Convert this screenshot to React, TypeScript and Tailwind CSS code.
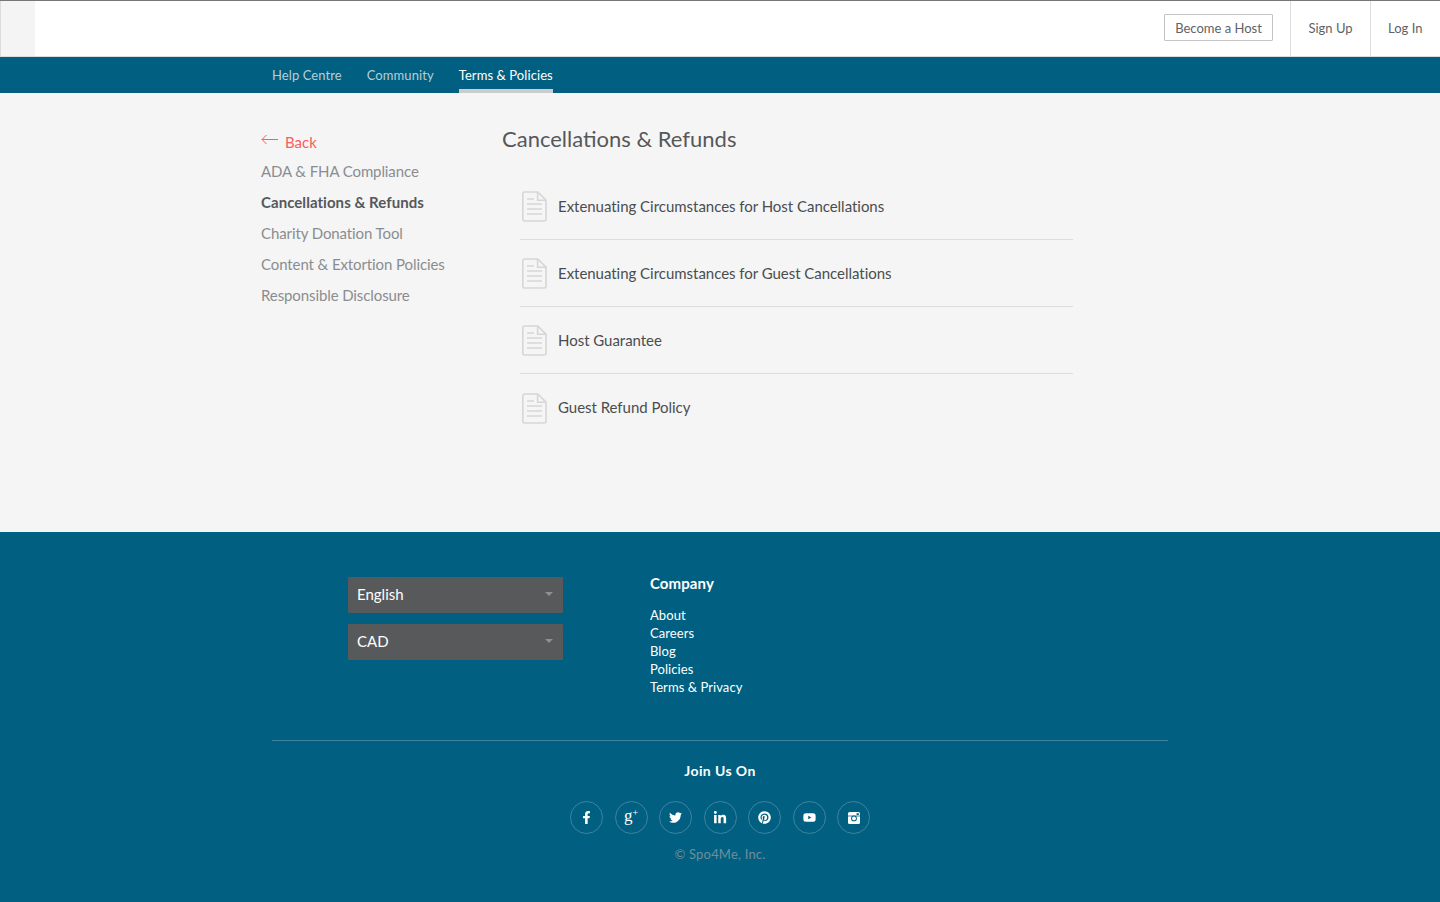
import React from "react";
import { FaFacebookF, FaTwitter, FaLinkedinIn, FaPinterest, FaYoutube } from "react-icons/fa";

function DocIcon() {
  return (
    <svg width="25" height="31" viewBox="0 0 25 31" fill="none" stroke="#d6d6d6" strokeWidth="1.6" className="shrink-0 mt-[1px] mr-[1px]">
      <path d="M2.4 1H15.8L24 9.2V28.4a1.6 1.6 0 0 1-1.6 1.6H2.4a1.6 1.6 0 0 1-1.6-1.6V2.6a1.6 1.6 0 0 1 1.6-1.6Z" />
      <path d="M15.6 1.4V9.3H23.8" />
      <path d="M5 8h7M5 13h15M5 18h15M5 23h15" />
    </svg>
  );
}

function InstagramIcon() {
  return (
    <svg width="12" height="12" viewBox="0 0 12 12">
      <rect x="0" y="0" width="12" height="12" rx="1.5" fill="#ffffff" />
      <rect x="0" y="3.6" width="12" height="0.8" fill="#016081" />
      <circle cx="6" cy="6.4" r="2.9" fill="#016081" />
      <circle cx="6" cy="6.4" r="1.9" fill="#ffffff" />
      <rect x="8.6" y="1.2" width="2.2" height="1.8" fill="#016081" />
    </svg>
  );
}

const docs = [
  "Extenuating Circumstances for Host Cancellations",
  "Extenuating Circumstances for Guest Cancellations",
  "Host Guarantee",
  "Guest Refund Policy",
];

const side = [
  ["ADA & FHA Compliance", false],
  ["Cancellations & Refunds", true],
  ["Charity Donation Tool", false],
  ["Content & Extortion Policies", false],
  ["Responsible Disclosure", false],
] as const;

function Social({ children }: { children: React.ReactNode }) {
  return (
    <div className="w-[33px] h-[33px] rounded-full border border-[#3f83a0] flex items-center justify-center text-white">
      {children}
    </div>
  );
}

function Select({ label }: { label: string }) {
  return (
    <div className="relative h-9 w-[215px] bg-[#58595b] flex items-center pl-[9px] pb-[1px] text-[15px] text-white rounded-[1px]">
      {label}
      <span className="absolute right-[10px] top-[15px] w-0 h-0 border-l-[4px] border-r-[4px] border-t-[4px] border-l-transparent border-r-transparent border-t-[#8f9091]" />
    </div>
  );
}

export default function App() {
  return (
    <div className="min-h-[902px] flex flex-col font-['Lato','Liberation_Sans',sans-serif] bg-[#f5f5f5]">
      <header className="h-[57px] bg-white border-t border-t-[#777777] border-b border-b-[#dcdcdc] flex items-stretch">
        <div className="w-[35px] bg-[#f4f4f4] border-l border-l-[#dcdcdc]" />
        <div className="flex-1" />
        <div className="flex items-center pr-[17px] pb-[2px]">
          <div className="h-[27px] w-[109px] border border-[#c4c4c4] rounded-[1px] pt-[2px] flex items-center justify-center text-[13px] text-[#5f6265]">
            Become a Host
          </div>
        </div>
        <div className="w-[80px] border-l border-l-[#dcdcdc] flex items-center justify-center text-[13px] text-[#5f6265]">
          Sign Up
        </div>
        <div className="w-[70px] border-l border-l-[#dcdcdc] flex items-center pl-[17px] text-[13px] text-[#5f6265]">
          Log In
        </div>
      </header>

      <nav className="h-9 bg-[#016081] flex items-stretch pl-[272px] gap-[25px] text-[13px] tracking-[0.08px]">
        <div className="flex items-center text-[#b9cdd6] pt-[2px]">Help Centre</div>
        <div className="flex items-center text-[#b9cdd6] pt-[2px]">Community</div>
        <div className="flex items-center text-white border-b-4 border-b-[#cccccc] pt-[5px]">Terms &amp; Policies</div>
      </nav>

      <main className="h-[439px] flex bg-[#f5f5f5] pl-[261px]">
        <aside className="w-[241px] pt-[37px]">
          <div className="flex items-center h-[22px] text-[15px] text-[#ff5a5f] mb-[4px] pt-[2px]">
            <svg width="17" height="11" viewBox="0 0 17 11" fill="none" stroke="#ff5a5f" strokeWidth="1" className="mr-[7px] -mt-[6px]">
              <path d="M17 5.5H1M5.5 1 1 5.5l4.5 4.5" />
            </svg>
            Back
          </div>
          {side.map(([t, active]) => (
            <div
              key={t}
              className={"h-[31px] flex items-center text-[15px] " + (active ? "font-bold text-[#55585b] tracking-[0.05px]" : "text-[#8a8d90] tracking-[-0.1px]")}
            >
              {t}
            </div>
          ))}
        </aside>
        <section className="flex-1">
          <h1 className="mt-[32px] text-[22px] leading-[27px] text-[#55585b]">Cancellations &amp; Refunds</h1>
          <ul className="mt-[21px] ml-[18px] w-[553px]">
            {docs.map((d, i) => (
              <li
                key={d}
                className={"h-[67px] flex items-center pl-[2px] gap-[10px] text-[15px] text-[#4a4d50] tracking-[-0.03px] " + (i < 3 ? "border-b border-b-[#dddddd]" : "")}
              >
                <DocIcon />
                <span>{d}</span>
              </li>
            ))}
          </ul>
        </section>
      </main>

      <footer className="h-[370px] bg-[#016081] flex flex-col items-center">
        <div className="w-[896px] h-[209px] border-b border-b-[#3f83a0] flex pl-[76px]">
          <div className="w-[302px] pt-[45px] flex flex-col gap-[11px]">
            <Select label="English" />
            <Select label="CAD" />
          </div>
          <div className="pt-[41px] text-white">
            <div className="text-[15px] font-bold leading-[20px] mb-[13px] tracking-[0.1px]">Company</div>
            <div className="text-[13px] leading-[18px] tracking-[0.07px]">
              <div>About</div>
              <div>Careers</div>
              <div>Blog</div>
              <div>Policies</div>
              <div>Terms &amp; Privacy</div>
            </div>
          </div>
        </div>
        <div className="mt-[20px] text-[14px] font-bold leading-[20px] text-white tracking-[0.4px]">Join Us On</div>
        <div className="mt-[20px] flex gap-[11.5px]">
          <Social><FaFacebookF className="text-[13px]" /></Social>
          <Social>
            <span className="font-['Liberation_Serif',serif] text-[17px] leading-none -mt-[4px]">g<sup className="text-[10px] -top-[5px]">+</sup></span>
          </Social>
          <Social><FaTwitter className="text-[13px]" /></Social>
          <Social><FaLinkedinIn className="text-[14px]" /></Social>
          <Social><FaPinterest className="text-[13px]" /></Social>
          <Social><FaYoutube className="text-[13px]" /></Social>
          <Social><InstagramIcon /></Social>
        </div>
        <div className="mt-[11px] text-[13px] leading-[18px] text-[#6f8d9b] tracking-[0.2px]">© Spo4Me, Inc.</div>
      </footer>
    </div>
  );
}
